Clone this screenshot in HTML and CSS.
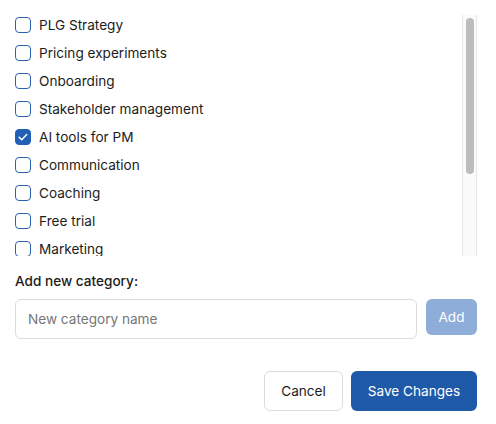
FILE: index.html
```html
<!DOCTYPE html>
<html>
<head>
<meta charset="utf-8">
<link rel="stylesheet" href="styles.css">
</head>
<body>
<div class="panel">
  <div class="scroll">
    <div class="list">
      <label class="row"><span class="box"></span><span>PLG Strategy</span></label>
      <label class="row"><span class="box"></span><span>Pricing experiments</span></label>
      <label class="row"><span class="box"></span><span>Onboarding</span></label>
      <label class="row"><span class="box"></span><span>Stakeholder management</span></label>
      <label class="row"><span class="box checked"><svg viewBox="0 0 16 16" width="16" height="16"><path d="M4.2 8.3l2.5 2.4 5-5.2" fill="none" stroke="#fff" stroke-width="1.5" stroke-linecap="round" stroke-linejoin="round"/></svg></span><span>AI tools for PM</span></label>
      <label class="row"><span class="box"></span><span>Communication</span></label>
      <label class="row"><span class="box"></span><span>Coaching</span></label>
      <label class="row"><span class="box"></span><span>Free trial</span></label>
      <label class="row"><span class="box"></span><span>Marketing</span></label>
    </div>
    <div class="track"><div class="thumb"></div></div>
  </div>
  <div class="add">
    <div class="add-label">Add new category:</div>
    <div class="add-row">
      <input class="input" type="text" placeholder="New category name">
      <button class="btn-add">Add</button>
    </div>
  </div>
  <div class="actions">
    <button class="btn-cancel">Cancel</button>
    <button class="btn-save">Save Changes</button>
  </div>
</div>
</body>
</html>
```

FILE: styles.css
```css
* { box-sizing: border-box; }
html, body { margin: 0; padding: 0; background: #fff; }
body {
  font-family: Inter, "Liberation Sans", sans-serif;
  font-size: 13.6px;
  color: #1c1c1c;
}
.panel {
  padding: 15px 19px 0 15px;
}
.scroll {
  display: flex;
  height: 241px;
}
.list {
  flex: 1;
  overflow: hidden;
  display: flex;
  flex-direction: column;
  gap: 8px;
}
.track {
  width: 15px;
  flex: none;
  background: #fafafa;
  border-left: 1px solid #e6e6e6;
  border-right: 1px solid #e6e6e6;
  padding: 3px 2px 0 3px;
}
.thumb {
  height: 156px;
  background: #bcbcbc;
  border-radius: 4px;
}
.row {
  display: flex;
  align-items: center;
  gap: 8px;
  height: 20px;
  flex: none;
  line-height: 20px;
}
.box {
  width: 16px;
  height: 16px;
  border: 1px solid #2a62b2;
  border-radius: 4px;
  background: #fff;
  flex: none;
  display: flex;
}
.box.checked {
  background: #2160b4;
  border-color: #2160b4;
}
.box.checked svg { margin: -1px; }
.add {
  margin-top: 15px;
}
.add-label {
  font-weight: 500;
  line-height: 20px;
}
.add-row {
  display: flex;
  align-items: flex-start;
  gap: 9px;
  margin-top: 8px;
}
.input {
  flex: 1;
  height: 40px;
  border: 1px solid #dcdcdc;
  border-radius: 6px;
  padding: 0 12px;
  font-family: inherit;
  font-size: 13.6px;
  color: #1c1c1c;
  outline: none;
}
.input::placeholder { color: #767676; }
.btn-add {
  width: 51px;
  height: 36px;
  border: none;
  border-radius: 6px;
  background: #8eaed9;
  color: #fff;
  font-family: inherit;
  font-size: 13.6px;
}
.actions {
  display: flex;
  justify-content: flex-end;
  gap: 8px;
  margin-top: 32px;
}
.btn-cancel {
  height: 40px;
  width: 79px;
  border: 1px solid #dcdcdc;
  border-radius: 6px;
  background: #fff;
  color: #1c1c1c;
  font-family: inherit;
  font-size: 13.6px;
}
.btn-save {
  height: 40px;
  width: 126px;
  border: none;
  border-radius: 6px;
  background: #1f5aa9;
  color: #fff;
  font-family: inherit;
  font-size: 13.6px;
}
```
